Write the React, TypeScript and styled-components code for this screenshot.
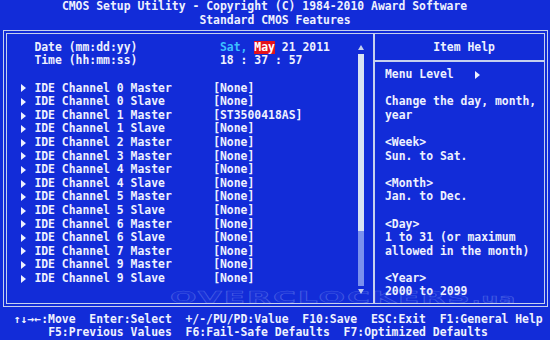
import React from "react";
import styled, { createGlobalStyle } from "styled-components";

const CW = 6.875;
const RH = 13.6;
const cols = (n: number) => `${n * CW}px`;
const rows = (n: number) => `${n * RH}px`;

const BLUE = "#122cd8";
const INK = "#eef1ff";
const LINE = "#c6d0ee";

const Global = createGlobalStyle`
  html, body { margin: 0; padding: 0; background: ${BLUE}; overflow: hidden; }
`;

const Screen = styled.div`
  position: relative;
  width: 550px;
  height: 340px;
  overflow: hidden;
  background: ${BLUE};
  color: ${INK};
  font-family: "DejaVu Sans Mono", "Liberation Mono", monospace;
  font-weight: bold;
  font-size: 11.4px;
  letter-spacing: 0.012px;
  line-height: ${RH}px;
  white-space: pre;
`;

const Header = styled.header`
  height: ${rows(2)};
`;

const TextLine = styled.div<{ $indent: number }>`
  height: ${RH}px;
  padding-left: ${(p) => cols(p.$indent)};
`;

const Frame = styled.section`
  box-sizing: border-box;
  margin: 2.8px 0 0 3px;
  width: 545px;
  height: 277px;
  border: 4px double ${LINE};
  display: flex;
`;

const MainPanel = styled.div`
  box-sizing: border-box;
  width: 366px;
  padding-top: 6.8px;
  display: flex;
`;

const List = styled.div`
  width: 350.5px;
`;

const Row = styled.div`
  display: flex;
  height: ${RH}px;
`;

const MarkerCell = styled.span<{ $hidden?: boolean }>`
  margin-left: 13.625px;
  width: ${cols(2)};
  display: flex;
  align-items: center;
  &::before {
    content: "";
    display: ${(p) => (p.$hidden ? "none" : "block")};
    width: 0;
    height: 0;
    margin-left: 0.5px;
    border-left: 5.5px solid ${INK};
    border-top: 4px solid transparent;
    border-bottom: 4px solid transparent;
  }
`;

const Label = styled.span`
  width: ${cols(26)};
`;

const Value = styled.span<{ $shift?: number }>`
  padding-left: ${(p) => cols(p.$shift ?? 0)};
`;

const DayName = styled.span`
  color: #3cc0ff;
`;

const Selected = styled.span`
  display: inline-block;
  height: ${RH}px;
  background: #e3121c;
  color: #ffffff;
`;

const ScrollBar = styled.div`
  width: ${CW}px;
  display: flex;
  flex-direction: column;
`;

const ScrollArrow = styled.div<{ $down?: boolean }>`
  height: ${RH}px;
  display: flex;
  justify-content: center;
  align-items: ${(p) => (p.$down ? "flex-start" : "flex-end")};
  padding: ${(p) => (p.$down ? "3px 0 0" : "0 0 4px")};
  box-sizing: border-box;
  &::before {
    content: "";
    width: 0;
    height: 0;
    border-left: 3px solid transparent;
    border-right: 3px solid transparent;
    ${(p) =>
      p.$down
        ? `border-top: 5px solid ${LINE};`
        : `border-bottom: 5px solid ${LINE};`}
  }
`;

const Thumb = styled.div<{ $rows: number }>`
  height: ${(p) => rows(p.$rows)};
  background: #d9e3f3;
`;

const Track = styled.div<{ $rows: number }>`
  height: ${(p) => rows(p.$rows)};
  background-color: #3f5fe2;
  background-image: radial-gradient(circle, #7d93ee 0.7px, transparent 0.9px);
  background-size: 2px 2px;
`;

const HelpPanel = styled.aside`
  flex: 1;
  border-left: 2px solid ${LINE};
  padding-top: 6.8px;
`;

const HelpTitle = styled.div`
  height: ${RH}px;
  padding-left: 58.125px;
`;

const HelpRule = styled.div`
  height: ${RH}px;
  position: relative;
  &::after {
    content: "";
    position: absolute;
    left: 0;
    right: 0;
    top: 6px;
    height: 2px;
    background: ${LINE};
  }
`;

const HelpLine = styled.div<{ $heading?: boolean }>`
  height: ${RH}px;
  padding-left: 10px;
  display: flex;
  align-items: center;
  font-weight: ${(p) => (p.$heading ? "bold" : "600")};
`;

const LevelMarker = styled.span`
  display: inline-block;
  width: 0;
  height: 0;
  margin-left: 1px;
  border-left: 5.5px solid ${INK};
  border-top: 4px solid transparent;
  border-bottom: 4px solid transparent;
`;

const Footer = styled.footer`
  margin-top: 5.8px;
`;

const Watermark = styled.div`
  position: absolute;
  left: 170px;
  top: 289px;
  font-family: "DejaVu Sans", sans-serif;
  font-weight: bold;
  font-size: 16px;
  line-height: 18px;
  letter-spacing: 1px;
  color: rgba(255, 255, 255, 0.03);
  -webkit-text-stroke: 0.6px rgba(190, 205, 255, 0.28);
  transform: scaleX(1.95);
  transform-origin: left center;
  pointer-events: none;
`;

const WatermarkSmall = styled.span`
  font-size: 12px;
  letter-spacing: 0.5px;
`;

const devices: [string, string][] = [
  ["IDE Channel 0 Master", "[None]"],
  ["IDE Channel 0 Slave", "[None]"],
  ["IDE Channel 1 Master", "[ST3500418AS]"],
  ["IDE Channel 1 Slave", "[None]"],
  ["IDE Channel 2 Master", "[None]"],
  ["IDE Channel 3 Master", "[None]"],
  ["IDE Channel 4 Master", "[None]"],
  ["IDE Channel 4 Slave", "[None]"],
  ["IDE Channel 5 Master", "[None]"],
  ["IDE Channel 5 Slave", "[None]"],
  ["IDE Channel 6 Master", "[None]"],
  ["IDE Channel 6 Slave", "[None]"],
  ["IDE Channel 7 Master", "[None]"],
  ["IDE Channel 9 Master", "[None]"],
  ["IDE Channel 9 Slave", "[None]"],
];

type Help = { text: string; heading?: boolean };
const help: Help[] = [
  { text: "" },
  { text: "Change the day, month," },
  { text: "year" },
  { text: "" },
  { text: "<Week>", heading: true },
  { text: "Sun. to Sat." },
  { text: "" },
  { text: "<Month>", heading: true },
  { text: "Jan. to Dec." },
  { text: "" },
  { text: "<Day>", heading: true },
  { text: "1 to 31 (or maximum" },
  { text: "allowed in the month)" },
  { text: "" },
  { text: "<Year>", heading: true },
  { text: "2000 to 2099" },
];

export default function App() {
  return (
    <>
      <Global />
      <Screen>
        <Header>
          <TextLine $indent={9}>
            CMOS Setup Utility - Copyright (C) 1984-2010 Award Software
          </TextLine>
          <TextLine $indent={29}>Standard CMOS Features</TextLine>
        </Header>
        <Frame>
          <MainPanel>
            <List>
              <Row>
                <MarkerCell $hidden />
                <Label>Date (mm:dd:yy)</Label>
                <Value $shift={1}>
                  <DayName>Sat,</DayName> <Selected>May</Selected> 21 2011
                </Value>
              </Row>
              <Row>
                <MarkerCell $hidden />
                <Label>Time (hh:mm:ss)</Label>
                <Value $shift={1}>18 : 37 : 57</Value>
              </Row>
              <Row />
              {devices.map(([name, value]) => (
                <Row key={name}>
                  <MarkerCell />
                  <Label>{name}</Label>
                  <Value>{value}</Value>
                </Row>
              ))}
            </List>
            <ScrollBar>
              <ScrollArrow />
              <Thumb $rows={13} />
              <Track $rows={4} />
              <ScrollArrow $down />
            </ScrollBar>
          </MainPanel>
          <HelpPanel>
            <HelpTitle>Item Help</HelpTitle>
            <HelpRule />
            <HelpLine>
              {"Menu Level   "}
              <LevelMarker />
            </HelpLine>
            {help.map((h, i) => (
              <HelpLine key={i} $heading={h.heading}>
                {h.text}
              </HelpLine>
            ))}
          </HelpPanel>
        </Frame>
        <Footer>
          <TextLine $indent={2}>
            ↑↓→←:Move  Enter:Select  +/-/PU/PD:Value  F10:Save  ESC:Exit  F1:General Help
          </TextLine>
          <TextLine $indent={7}>
            F5:Previous Values  F6:Fail-Safe Defaults  F7:Optimized Defaults
          </TextLine>
        </Footer>
        <Watermark>
          OVERCLOCKERS<WatermarkSmall>.ua</WatermarkSmall>
        </Watermark>
      </Screen>
    </>
  );
}
